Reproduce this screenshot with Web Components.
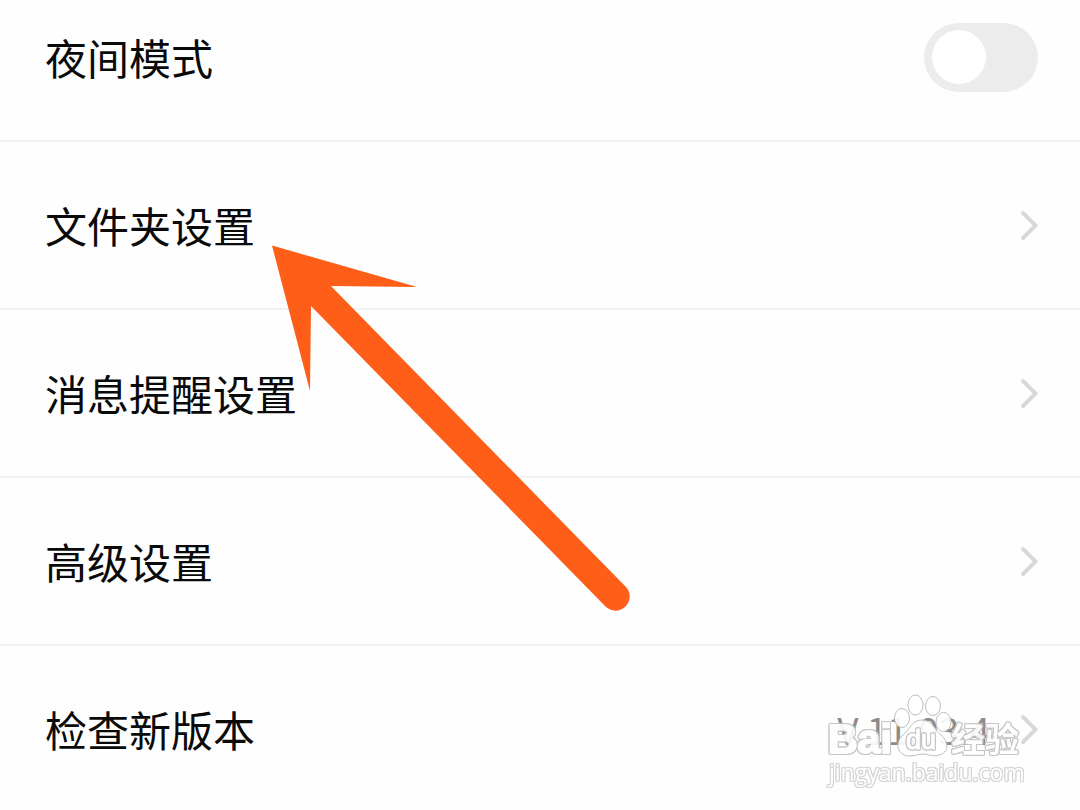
<!DOCTYPE html>
<html lang="zh-CN">
<head>
<meta charset="utf-8">
<meta name="viewport" content="width=device-width, initial-scale=1">
<title>设置</title>
<style>
html, body { margin: 0; height: 100%; overflow: hidden; }
body { background: #fefefe; color: #0a0a0a; font: 42px/60px "Noto Sans CJK SC", sans-serif; }
</style>
</head>
<body>
<settings-page></settings-page>
<script>
customElements.define('toggle-switch', class extends HTMLElement {
  constructor() {
    super();
    this.attachShadow({ mode: 'open' }).innerHTML = `
<style>
:host { display: block; }
input { display: flex; align-items: center; box-sizing: border-box; appearance: none; width: 114px; height: 69px; margin: 0; padding: 8px; border-radius: 35px; background: #ececec; cursor: pointer; }
input::before { content: ""; width: 54px; height: 54px; border-radius: 50%; background: #fff; }
input:checked { justify-content: flex-end; background: #ff5e18; }
</style>
<input type="checkbox" role="switch" aria-label="${this.getAttribute('label')}">`;
  }
});
customElements.define('settings-row', class extends HTMLElement {
  constructor() {
    super();
    const link = this.hasAttribute('href');
    const tag = link ? 'a' : 'div';
    this.attachShadow({ mode: 'open' }).innerHTML = `
<style>
:host { display: block; border-bottom: 2px solid #f2f2f2; }
.row { display: flex; align-items: center; justify-content: space-between; height: 166px; padding: 0 42px 0 45px; color: inherit; text-decoration: none; }
.end { display: flex; align-items: center; gap: 30px; }
svg { display: block; width: 18px; height: 30px; fill: none; stroke: #d8d8d8; stroke-width: 4; stroke-linecap: round; stroke-linejoin: miter; overflow: visible; }
</style>
<${tag} class="row" ${link ? 'href="' + this.getAttribute('href') + '"' : ''}>
<span class="label"><slot></slot></span>
<span class="end"><slot name="end"></slot>${link ? '<svg viewBox="0 0 18 30" aria-hidden="true"><path d="M3 3 15.500 15.500 3 28"/></svg>' : ''}</span>
</${tag}>`;
  }
});
customElements.define('pointer-arrow', class extends HTMLElement {
  constructor() {
    super();
    this.attachShadow({ mode: 'open' }).innerHTML = `
<style>
:host { position: absolute; left: 272px; top: 245px; pointer-events: none; }
svg { display: block; width: 360px; height: 368px; fill: #ff5e18; }
</style>
<svg viewBox="272 245 360 368" aria-hidden="true"><path d="M272 245.500 417 287 331 286 625.500 586.500A14 14 0 0 1 605.500 606.500L311 306 310 391Z"/></svg>`;
  }
});
customElements.define('site-watermark', class extends HTMLElement {
  constructor() {
    super();
    this.attachShadow({ mode: 'open' }).innerHTML = `
<style>
:host { position: absolute; right: 56px; top: 690px; pointer-events: none; }
svg { display: block; width: 200px; height: 100px; overflow: visible; }
text { fill: #fff; stroke: #fff; stroke-linejoin: round; }
.mark { opacity: .9; filter: drop-shadow(1px 0 0 #c0c0c0) drop-shadow(-1px 0 0 #c0c0c0) drop-shadow(0 1px 0 #c0c0c0) drop-shadow(0 -1px 0 #c0c0c0); }
.faint { filter: drop-shadow(1px 0 0 #d2d2d2) drop-shadow(-1px 0 0 #d2d2d2) drop-shadow(0 1px 0 #d2d2d2) drop-shadow(0 -1px 0 #d2d2d2); }
.latin { font: bold 41px "Liberation Sans", sans-serif; stroke-width: 2; }
.du { font: 27px "Liberation Sans", sans-serif; stroke-width: 1; }
.cjk { font: bold 34px "Noto Sans CJK SC", sans-serif; stroke-width: 0; }
.url { font: 23px "Open Sans", sans-serif; stroke-width: 0; }
.paw { fill: #fff; fill-opacity: .9; stroke: #bdbdbd; stroke-width: 1; }
</style>
<svg viewBox="824 690 200 100">
<g class="mark"><text class="latin" x="828" y="753">Bai</text>
<text class="cjk" x="951" y="752">经验</text></g>
<g class="paw"><path d="M922 720C912 720 910 729 903 735C895 742 896 755 909 756C915 756 919 754 923 754C928 754 933 757 939 755C949 753 949 742 941 735C934 729 932 720 922 720Z"/><ellipse cx="915.500" cy="705" rx="7.500" ry="10"/><ellipse cx="933" cy="706" rx="7.500" ry="9.500"/><ellipse cx="902" cy="718" rx="7.500" ry="9.500"/><ellipse cx="943.500" cy="722" rx="7.500" ry="9.500"/></g>
<g class="mark"><text class="du" x="906" y="749">du</text></g>
<g class="mark faint"><text class="url" x="829" y="781">jingyan.baidu.com</text></g>
</svg>`;
  }
});
customElements.define('settings-page', class extends HTMLElement {
  constructor() {
    super();
    this.attachShadow({ mode: 'open' }).innerHTML = `
<style>
:host { display: block; position: relative; height: 100%; overflow: hidden; }
main { margin-top: -26px; }
.version { font-size: 37px; color: #8c8c8c; }
</style>
<main>
<settings-row>夜间模式<toggle-switch slot="end" label="夜间模式"></toggle-switch></settings-row>
<settings-row href="#folders">文件夹设置</settings-row>
<settings-row href="#notifications">消息提醒设置</settings-row>
<settings-row href="#advanced">高级设置</settings-row>
<settings-row href="#version">检查新版本<span class="version" slot="end">V 11.03.4</span></settings-row>
</main>
<pointer-arrow></pointer-arrow>
<site-watermark></site-watermark>`;
  }
});
</script>
</body>
</html>
